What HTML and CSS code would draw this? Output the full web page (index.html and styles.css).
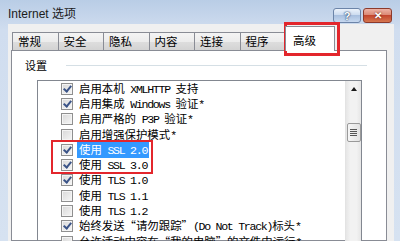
FILE: index.html
```html
<html>
<head>
<link rel="stylesheet" href="styles.css">
</head>
<body>
<div class="window">
  <div class="titlebar">
    <span class="title">Internet 选项</span>
    <div class="caption-btns">
      <span class="cbtn help">?</span>
      <span class="cbtn close">&#x2715;</span>
    </div>
  </div>
  <div class="client">
    <div class="tabs">
      <span class="tab">常规</span>
      <span class="tab">安全</span>
      <span class="tab">隐私</span>
      <span class="tab">内容</span>
      <span class="tab">连接</span>
      <span class="tab">程序</span>
      <span class="tab active">高级</span>
    </div>
    <div class="panel">
      <div class="group-head"><span class="group-label">设置</span><i class="rule"></i></div>
      <div class="listbox">
        <ul class="items">
          <li><span class="cb on"></span><span class="lbl">启用本机<span class="en"> XMLHTTP </span>支持</span></li>
          <li><span class="cb on"></span><span class="lbl">启用集成<span class="en"> Windows </span>验证<span class="en">*</span></span></li>
          <li><span class="cb"></span><span class="lbl">启用严格的<span class="en"> P3P </span>验证<span class="en">*</span></span></li>
          <li><span class="cb"></span><span class="lbl">启用增强保护模式<span class="en">*</span></span></li>
          <li><span class="cb on"></span><span class="lbl sel">使用<span class="en"> SSL 2.0</span></span></li>
          <li><span class="cb on"></span><span class="lbl">使用<span class="en"> SSL 3.0</span></span></li>
          <li><span class="cb on"></span><span class="lbl">使用<span class="en"> TLS 1.0</span></span></li>
          <li><span class="cb"></span><span class="lbl">使用<span class="en"> TLS 1.1</span></span></li>
          <li><span class="cb"></span><span class="lbl">使用<span class="en"> TLS 1.2</span></span></li>
          <li><span class="cb on"></span><span class="lbl">始终发送“请勿跟踪”<span class="en">(Do Not Track)</span>标头<span class="en">*</span></span></li>
          <li><span class="cb"></span><span class="lbl">允许活动内容在“我的电脑”的文件中运行<span class="en">*</span></span></li>
        </ul>
        <div class="vscroll">
          <span class="arrow-up"></span>
          <span class="thumb"><i></i><i></i><i></i><i></i></span>
        </div>
      </div>
    </div>
  </div>
  <div class="mark mark-tab"></div>
  <div class="mark mark-ssl"></div>
</div>
</body>
</html>
```

FILE: styles.css
```css
body{
  margin: 0;
  width: 400px;
  height: 241px;
  overflow: hidden;
  background: #c9d8ea;
}
.window{
  position: relative;
  height: 241px;
  background: linear-gradient(to bottom, #b9cde6, #d0ddef 30px, #d6e2f1);
  font-family: "Noto Sans CJK SC", sans-serif;
}
.titlebar{
  height: 24px;
  display: flex;
  padding-left: 8px;
}
.title{
  margin-top: 6px;
  line-height: 16px;
  font-family: "Liberation Sans", "Noto Sans CJK SC", sans-serif;
  font-size: 12px;
  color: #1b1b1b;
}
.caption-btns{
  margin-left: auto;
  margin-right: 8px;
  margin-top: 8px;
  display: flex;
  gap: 2px;
}
.cbtn{
  box-sizing: border-box;
  width: 28px;
  height: 15px;
  border: 1px solid #6c84a8;
  border-radius: 3px;
  display: flex;
  align-items: center;
  justify-content: center;
  font-family: "Liberation Sans", sans-serif;
  font-weight: bold;
  font-size: 11px;
  color: #fff;
}
.help{
  background: linear-gradient(to bottom, #edf3fb, #c9d9ee 50%, #a9c0df 50%, #c6d8ef);
  text-shadow: 0 0 2px #1d3a66, 0 0 1px #1d3a66;
}
.close{
  width: 29px;
  border-color: #8c3a2b;
  background: linear-gradient(to bottom, #eeb3a6, #d98570 50%, #c3462e 50%, #d6774f);
  font-size: 10px;
  text-shadow: 0 0 2px #5a1a10;
}
.client{
  box-sizing: border-box;
  height: 217px;
  margin: 0 6px 0 8px;
  padding: 0 7px 0 3px;
  background: #f0f0f0;
}
.tabs{
  height: 26px;
  display: flex;
  align-items: flex-end;
  padding-left: 1px;
}
.tab{
  box-sizing: border-box;
  width: 46.5px;
  height: 18px;
  margin-right: -1px;
  padding-left: 5px;
  border: 1px solid #898c95;
  border-bottom: none;
  background: linear-gradient(to bottom, #f4f4f4, #ececec 50%, #dedede 50%, #d3d3d3);
  font-size: 11.5px;
  line-height: 16px;
  color: #000;
}
.tab.active{
  width: 50px;
  height: 25px;
  margin-right: 0;
  margin-bottom: -1px;
  padding: 4px 0 0 7px;
  line-height: 18px;
  background: #fff;
  z-index: 1;
}
.panel{
  box-sizing: border-box;
  height: 191px;
  border: 1px solid #898c95;
  background: #fff;
  padding: 7px 19px 0 13px;
}
.group-head{
  height: 14px;
  display: flex;
  align-items: center;
}
.group-label{
  font-size: 11px;
  color: #000;
}
.rule{
  flex: 1;
  height: 1px;
  margin-left: 19px;
  background: #d5dfe5;
}
.listbox{
  height: 170px;
  margin: 8px 5px 0 12px;
  border: 1px solid #828790;
  display: flex;
  overflow: hidden;
}
.items{
  flex: 1;
  list-style: none;
  margin: 0;
  padding: 0 0 0 23px;
}
.items li{
  height: 15.3px;
  display: flex;
  align-items: center;
  gap: 4px;
  white-space: nowrap;
  font-size: 11.4px;
  line-height: 14px;
  color: #000;
}
.lbl{
  padding: 0 2px;
}
.lbl.sel{
  background: #3399ff;
  color: #fff;
}
.en{
  font-family: "Liberation Mono", monospace;
  font-size: 11.6px;
  letter-spacing: -1.3px;
}
.cb{
  position: relative;
  box-sizing: border-box;
  width: 12px;
  height: 12px;
  flex: none;
  border: 1px solid #8f8f8f;
  background: linear-gradient(135deg, #d8d8d8, #f6f6f6);
  box-shadow: inset 0 0 0 1px #f4f4f4;
}
.cb.on::after{
  content: "";
  position: absolute;
  left: 3px;
  top: 0px;
  width: 3px;
  height: 6px;
  border-right: 2px solid #3b5488;
  border-bottom: 2px solid #3b5488;
  transform: rotate(40deg);
}
.vscroll{
  width: 16px;
  box-sizing: border-box;
  border-left: 1px solid #e3e3e3;
  background: linear-gradient(to right, #e6e6e6, #f2f2f2 30%, #f2f2f2 70%, #e6e6e6);
  display: flex;
  flex-direction: column;
  align-items: center;
}
.arrow-up{
  margin-top: 6px;
  width: 0;
  height: 0;
  border-left: 3.5px solid transparent;
  border-right: 3.5px solid transparent;
  border-bottom: 4px solid #1a1a1a;
}
.thumb{
  box-sizing: border-box;
  width: 14px;
  height: 19px;
  margin-top: 32px;
  border: 1px solid #9a9a9a;
  border-radius: 2px;
  background: linear-gradient(to right, #f6f6f6, #e2e2e2);
  display: flex;
  flex-direction: column;
  align-items: center;
  justify-content: center;
  gap: 1px;
}
.thumb i{
  width: 7px;
  height: 1px;
  background: #555;
}
.mark{
  position: absolute;
  box-sizing: border-box;
  border: 3px solid #e3262c;
}
.mark-tab{
  left: 284px;
  top: 22px;
  width: 56px;
  height: 34px;
}
.mark-ssl{
  left: 51px;
  top: 140px;
  width: 102px;
  height: 34px;
  border-width: 2px;
}
```
